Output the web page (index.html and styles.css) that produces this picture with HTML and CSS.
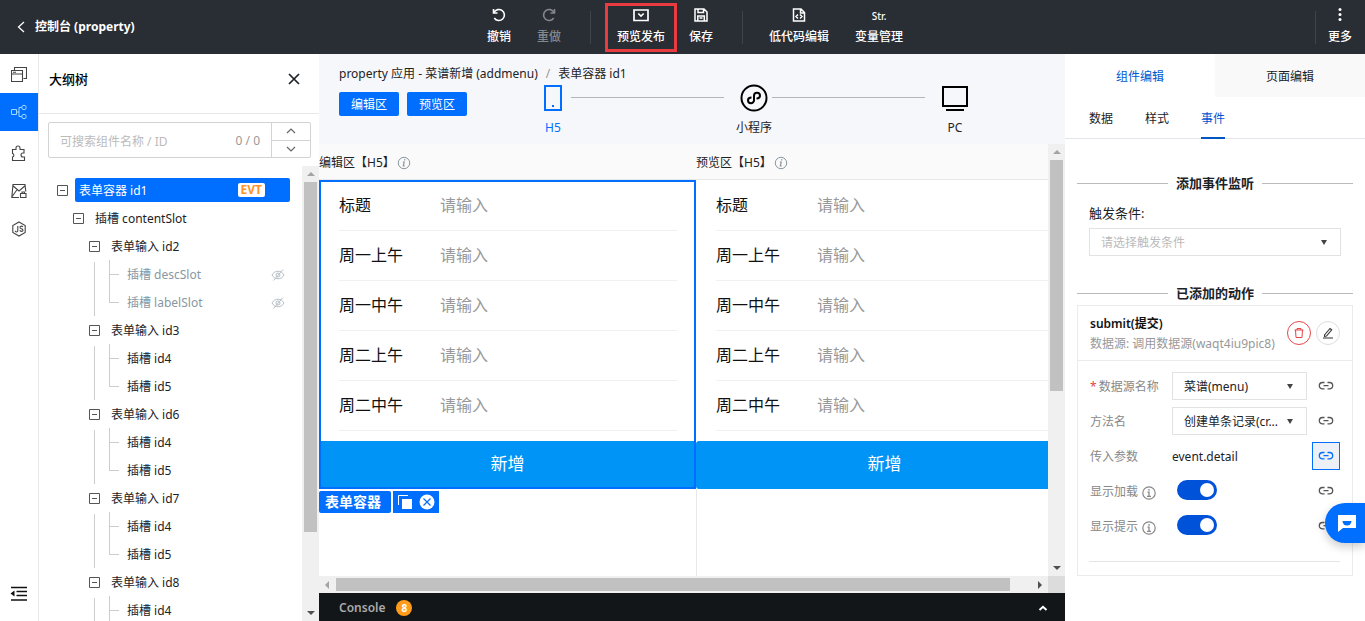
FILE: index.html
```html
<!DOCTYPE html>
<html lang="zh-CN">
<head>
<meta charset="utf-8">
<title>控制台 (property)</title>
<link rel="stylesheet" href="styles.css">
</head>
<body>
<svg class="defs" aria-hidden="true">
  <symbol id="link" viewBox="0 0 16 16"><path d="M6.500 4.500H4.500a3.200 3.200 0 0 0 0 6.400h2M9.500 4.500h2a3.200 3.200 0 0 1 0 6.400h-2M5.500 7.700h5" fill="none" stroke="currentColor" stroke-width="1.300"/></symbol>
  <symbol id="info" viewBox="0 0 14 14"><circle cx="7" cy="7" r="6.200" fill="none" stroke="currentColor" stroke-width="1.200"/><path d="M7 3v1.700M5.500 6.200H7v4M5 10.300h4" fill="none" stroke="currentColor" stroke-width="1.300"/></symbol>
  <symbol id="info-i" viewBox="0 0 14 14"><circle cx="7" cy="7" r="5.700" fill="none" stroke="currentColor"/><path d="M7.900 3.200l-.3 1.300M5.800 6h1.400l-.9 4h1.500" fill="none" stroke="currentColor" stroke-width="1.200"/></symbol>
  <symbol id="hidden-eye" viewBox="0 0 14 12"><path d="M1 6c2.500-5 9.500-5 12 0-2.500 5-9.500 5-12 0zM12 .5L2.500 11.500" fill="none" stroke="currentColor"/><circle cx="7" cy="6" r="2" fill="none" stroke="currentColor"/></symbol>
  <symbol id="minus-box" viewBox="0 0 11 11"><path d="M.5.5h10v10H.5zM3 5.500h5" fill="none" stroke="currentColor"/></symbol>
  <symbol id="up" viewBox="0 0 10 6"><path d="M1 5l4-4 4 4" fill="none" stroke="currentColor" stroke-width="1.200"/></symbol>
  <symbol id="down" viewBox="0 0 10 6"><path d="M1 1l4 4 4-4" fill="none" stroke="currentColor" stroke-width="1.200"/></symbol>
</svg>

<header class="topbar">
  <a class="back" href="#"><svg width="8" height="12" viewBox="0 0 8 12"><path d="M7 1L1.500 6 7 11" fill="none" stroke="currentColor" stroke-width="1.300"/></svg>控制台 (property)</a>
  <nav class="tools">
    <button class="tool"><svg width="16" height="16" viewBox="0 0 16 16"><path d="M2.500 2v4h4M3 5.500a5.500 5.500 0 1 1 .3 5.500" fill="none" stroke="currentColor" stroke-width="1.600"/></svg>撤销</button>
    <button class="tool redo" disabled><svg width="16" height="16" viewBox="0 0 16 16"><path d="M13.500 2v4h-4M13 5.500a5.500 5.500 0 1 0-.3 5.500" fill="none" stroke="currentColor" stroke-width="1.600"/></svg>重做</button>
    <span class="sep"></span>
    <button class="tool marked"><svg width="16" height="16" viewBox="0 0 16 16"><path d="M1 3h14v10.500H1zM5.300 6.500L8 9l2.700-2.500" fill="none" stroke="currentColor" stroke-width="1.700"/></svg>预览发布</button>
    <button class="tool"><svg width="16" height="16" viewBox="0 0 16 16"><path d="M2 2h9l3 3v9H2zM5 2v3.500h5.500V2M4.800 14V9h6.500v5M6.500 11h3" fill="none" stroke="currentColor" stroke-width="1.500"/></svg>保存</button>
    <span class="sep"></span>
    <button class="tool"><svg width="16" height="16" viewBox="0 0 16 16"><path d="M2.500 2H10l3.500 3.500V14h-11zM9.500 2v4h4M7 7.500L5 9.500l2 2M9 7.500l2 2-2 2" fill="none" stroke="currentColor" stroke-width="1.500"/></svg>低代码编辑</button>
    <button class="tool vars"><span class="str">Str.</span>变量管理</button>
  </nav>
  <div class="more"><span class="sep"></span><button class="tool"><svg width="16" height="16" viewBox="0 0 16 16" fill="currentColor"><circle cx="8" cy="2.500" r="1.500"/><circle cx="8" cy="7.500" r="1.500"/><circle cx="8" cy="12.500" r="1.500"/></svg>更多</button></div>
</header>

<div class="app">
  <nav class="rail">
    <button class="rail-item" aria-label="页面"><svg width="16" height="16" viewBox="0 0 16 16"><path d="M.5 4.500h11v11H.5zM.5 8h11M2 6.200h3M3.500 4V1.500h12v11h-3" fill="none" stroke="currentColor" stroke-width="1.100"/></svg></button>
    <button class="rail-item current" aria-label="大纲树"><svg width="16" height="16" viewBox="0 0 16 16"><path d="M.5 5.500h5v5h-5zM5.500 8H8M11 3.500H8v9h3" fill="none" stroke="currentColor"/><circle cx="13" cy="3.500" r="2.200" fill="none" stroke="currentColor"/><circle cx="13" cy="12.500" r="2.200" fill="none" stroke="currentColor"/></svg></button>
    <button class="rail-item" aria-label="组件"><svg width="16" height="16" viewBox="0 0 16 16"><path d="M1.500 4.500H5V3a2 2 0 1 1 4 0v1.500h4V8h-1a2 2 0 1 0 0 4h1.500v3.500h-12V12a1.800 1.800 0 0 0 0-3.500z" fill="none" stroke="currentColor" stroke-width="1.100"/></svg></button>
    <button class="rail-item" aria-label="素材"><svg width="16" height="16" viewBox="0 0 16 16"><path d="M8 14.500H.8L2 1.500h12l.8 7M2.200 3l5.800 5 5.800-5M.8 14l5-7M9.500 10.500h5.500v4H9.500zM11 10.500V9h2.500v1.500" fill="none" stroke="currentColor" stroke-width="1.100"/></svg></button>
    <button class="rail-item" aria-label="脚本"><svg width="16" height="16" viewBox="0 0 16 16"><path d="M8 1l6.200 3.500v7L8 15l-6.200-3.500v-7zM6.800 5v4.500c0 2-2.500 1.800-2.500.3M11.800 6c-.8-1.300-3-1-2.800.5.200 1.500 3 1 3 2.700 0 1.600-2.700 1.600-3.300.1" fill="none" stroke="currentColor" stroke-width="1.100"/></svg></button>
    <button class="rail-item fold" aria-label="收起"><svg width="18" height="16" viewBox="0 0 18 16"><path d="M1 1.500h16M6.500 5.500H17M6.500 9.500H17M1 14h16" fill="none" stroke="currentColor" stroke-width="1.700"/><path d="M4.500 4.500v6L.5 7.500z" fill="currentColor"/></svg></button>
  </nav>

  <section class="outline">
    <div class="outline-head"><h2>大纲树</h2><button aria-label="关闭"><svg width="12" height="12" viewBox="0 0 12 12"><path d="M1 1l10 10M11 1L1 11" stroke="currentColor" stroke-width="1.700"/></svg></button></div>
    <div class="search">
      <input type="text" aria-label="搜索组件" placeholder="可搜索组件名称 / ID"><span class="count">0 / 0</span>
      <div class="stepper"><button aria-label="上一个"><svg width="10" height="6"><use href="#up"/></svg></button><button aria-label="下一个"><svg width="10" height="6"><use href="#down"/></svg></button></div>
    </div>
    <div class="tree-wrap">
      <ul class="tree">
        <li><div class="row"><svg class="box"><use href="#minus-box"/></svg><span class="picked">表单容器 id1<b class="evt">EVT</b></span></div>
          <ul class="level"><li><div class="row"><svg class="box"><use href="#minus-box"/></svg><span class="name">插槽 contentSlot</span></div>
            <ul class="level">
              <li><div class="row"><svg class="box"><use href="#minus-box"/></svg><span class="name">表单输入 id2</span></div>
                <div class="guide"><ul class="leaves muted"><li>插槽 descSlot<svg class="eye"><use href="#hidden-eye"/></svg></li><li>插槽 labelSlot<svg class="eye"><use href="#hidden-eye"/></svg></li></ul></div></li>
              <li><div class="row"><svg class="box"><use href="#minus-box"/></svg><span class="name">表单输入 id3</span></div>
                <div class="guide"><ul class="leaves"><li>插槽 id4</li><li>插槽 id5</li></ul></div></li>
              <li><div class="row"><svg class="box"><use href="#minus-box"/></svg><span class="name">表单输入 id6</span></div>
                <div class="guide"><ul class="leaves"><li>插槽 id4</li><li>插槽 id5</li></ul></div></li>
              <li><div class="row"><svg class="box"><use href="#minus-box"/></svg><span class="name">表单输入 id7</span></div>
                <div class="guide"><ul class="leaves"><li>插槽 id4</li><li>插槽 id5</li></ul></div></li>
              <li><div class="row"><svg class="box"><use href="#minus-box"/></svg><span class="name">表单输入 id8</span></div>
                <div class="guide"><ul class="leaves"><li>插槽 id4</li><li>插槽 id5</li></ul></div></li>
            </ul></li></ul></li>
      </ul>
      <div class="vbar"><i class="arrow-up"></i><i class="thumb tree-thumb"></i><i class="arrow-down"></i></div>
    </div>
  </section>

  <main class="canvas">
    <div class="canvas-head">
      <div class="crumbs"><span>property 应用 - 菜谱新增 (addmenu)</span><span class="slash">/</span><span>表单容器 id1</span></div>
      <div class="modes">
        <button class="mode">编辑区</button><button class="mode">预览区</button>
        <div class="devices">
          <button class="device on"><svg width="28" height="28" viewBox="0 0 28 28"><path d="M6 2h16v24H6z" fill="none" stroke="currentColor" stroke-width="2"/><path d="M13 21h2v2h-2z" fill="currentColor"/></svg>H5</button>
          <span class="wire"></span>
          <button class="device"><svg width="28" height="28" viewBox="0 0 28 28" fill="none" stroke="currentColor" stroke-width="2"><circle cx="14" cy="14" r="12.500"/><path d="M11.500 13.500c-2.500 0-3.500 1.300-3.500 2.700a3 3 0 0 0 6 0v-4.400a3 3 0 0 1 6 0c0 1.400-1 2.700-3.500 2.700"/></svg>小程序</button>
          <span class="wire"></span>
          <button class="device"><svg width="28" height="28" viewBox="0 0 28 28"><path d="M2 3h24v19H2zM5 26h18" fill="none" stroke="currentColor" stroke-width="2"/></svg>PC</button>
        </div>
      </div>
    </div>
    <div class="stage">
      <div class="panes">
        <section class="pane">
          <h3>编辑区【H5】<svg width="14" height="14"><use href="#info-i"/></svg></h3>
          <form class="phone selected">
            <label>标题<input placeholder="请输入"></label><label>周一上午<input placeholder="请输入"></label><label>周一中午<input placeholder="请输入"></label><label>周二上午<input placeholder="请输入"></label><label>周二中午<input placeholder="请输入"></label>
            <button type="button">新增</button>
          </form>
          <div class="selection"><b>表单容器</b><span class="acts"><button aria-label="复制"><svg width="16" height="16" viewBox="0 0 16 16"><path d="M1.500 11V1.500H11" fill="none" stroke="#fff"/><path d="M5 5h10v10H5z" fill="#fff"/></svg></button><button aria-label="删除"><svg width="16" height="16" viewBox="0 0 16 16"><circle cx="8" cy="8" r="7.500" fill="#fff"/><path d="M4.500 4.500l7 7M11.500 4.500l-7 7" stroke="#006eff" stroke-width="1.200"/></svg></button></span></div>
        </section>
        <section class="pane">
          <h3>预览区【H5】<svg width="14" height="14"><use href="#info-i"/></svg></h3>
          <form class="phone">
            <label>标题<input placeholder="请输入"></label><label>周一上午<input placeholder="请输入"></label><label>周一中午<input placeholder="请输入"></label><label>周二上午<input placeholder="请输入"></label><label>周二中午<input placeholder="请输入"></label>
            <button type="button">新增</button>
          </form>
        </section>
      </div>
      <div class="vbar"><i class="arrow-up"></i><i class="thumb stage-thumb"></i><i class="arrow-down"></i></div>
    </div>
    <div class="hbar"><i class="arrow-left"></i><span class="track"><i class="hthumb"></i></span><i class="arrow-right"></i><i class="corner"></i></div>
    <footer class="console">Console<span class="badge">8</span><button aria-label="展开"><svg width="10" height="6" viewBox="0 0 10 6"><path d="M1.500 5L5 1.800 8.500 5" fill="none" stroke="currentColor" stroke-width="2"/></svg></button></footer>
  </main>

  <aside class="props">
    <div class="tabs"><button class="tab on">组件编辑</button><button class="tab">页面编辑</button></div>
    <div class="subtabs"><button>数据</button><button>样式</button><button class="on">事件</button></div>
    <div class="props-body">
      <h4 class="rule">添加事件监听</h4>
      <div class="trigger"><label for="trigger">触发条件:</label>
        <div class="pick wide empty"><select id="trigger"><option>请选择触发条件</option></select></div></div>
      <h4 class="rule">已添加的动作</h4>
      <div class="card">
        <div class="card-head"><div class="card-title"><b>submit(提交)</b><span>数据源: 调用数据源(waqt4iu9pic8)</span></div>
          <button class="round danger" aria-label="删除"><svg width="12" height="12" viewBox="0 0 12 12"><path d="M1.500 3h9M2.500 3l.5 7.500h6l.5-7.500M4 3V1.500h4V3" fill="none" stroke="currentColor"/></svg></button>
          <button class="round" aria-label="编辑"><svg width="12" height="12" viewBox="0 0 12 12"><path d="M2.500 8L8 1.500l1.700 1.400L4.500 9l-2 .3zM1 11h10" fill="none" stroke="currentColor" stroke-width="1.100"/></svg></button></div>
        <div class="fields">
          <div class="field"><label for="source"><em>*</em> 数据源名称</label><div class="pick"><select id="source"><option>菜谱(menu)</option></select></div><button class="bind" aria-label="绑定"><svg><use href="#link"/></svg></button></div>
          <div class="field"><label for="method">方法名</label><div class="pick"><select id="method"><option>创建单条记录(cr...</option></select></div><button class="bind" aria-label="绑定"><svg><use href="#link"/></svg></button></div>
          <div class="field"><span class="label">传入参数</span><span class="value">event.detail</span><button class="bind bound" aria-label="绑定"><svg><use href="#link"/></svg></button></div>
          <div class="field"><label for="loading">显示加载<svg class="hint"><use href="#info"/></svg></label><input class="switch" id="loading" type="checkbox" checked><button class="bind" aria-label="绑定"><svg><use href="#link"/></svg></button></div>
          <div class="field"><label for="tips">显示提示<svg class="hint"><use href="#info"/></svg></label><input class="switch" id="tips" type="checkbox" checked><button class="bind" aria-label="绑定"><svg><use href="#link"/></svg></button></div>
        </div>
      </div>
    </div>
  </aside>
</div>
<button class="chat" aria-label="客服"><svg width="18" height="18" viewBox="0 0 18 18"><path d="M0 1h18v13H5l-5 4z" fill="#fff"/><path d="M4.500 7h9a4.500 4.500 0 0 1-9 0z" fill="#006eff"/></svg></button>
</body>
</html>
```
FILE: styles.css
```css
* { box-sizing: border-box; }
body {
  margin: 0;
  height: 100vh;
  display: flex;
  flex-direction: column;
  overflow: hidden;
  background: #fff;
  color: #1c2226;
  font: 12px/20px "Noto Sans", "Noto Sans CJK SC", sans-serif;
}
button, input, select { font: inherit; color: inherit; border: 0; padding: 0; margin: 0; background: none; border-radius: 0; }
h2, h3, h4, ul { margin: 0; padding: 0; list-style: none; }
svg { display: block; flex: none; }
.defs { position: absolute; width: 0; height: 0; }

.topbar { flex: none; display: flex; height: 54px; background: #292d34; color: #fff; font-weight: 500; }
.back { flex: 0 0 475px; display: flex; align-items: center; gap: 10px; padding-left: 17px; color: #fff; font-weight: 700; text-decoration: none; }
.tools { display: flex; align-items: center; }
.tool { display: flex; flex-direction: column; align-items: center; gap: 4px; height: 49px; padding: 4px 12px 0; white-space: nowrap; }
.tool.redo { margin-left: 2px; color: #85888c; }
.tool.vars { margin-left: 2px; }
.tool.marked { padding: 1px 9px 0; border: 3px solid #e93b40; }
.str { height: 16px; font-size: 10px; line-height: 18px; }
.sep { width: 1px; height: 33px; margin: 0 14px 0 17px; background: #3f444b; }
.more { display: flex; align-items: center; margin-left: auto; padding-right: 1px; }
.more .sep { margin: 0; }

.app { flex: 1; min-height: 0; display: flex; }
.rail { flex: none; width: 39px; display: flex; flex-direction: column; border-right: 1px solid #e8e8e8; padding-top: 1px; padding-bottom: 8px; }
.rail-item { height: 38px; display: grid; place-items: center; color: #444; }
.rail-item.current { background: #006eff; color: #9fd8ff; margin-bottom: 3px; }
.rail-item.fold { margin-top: auto; color: #111; }

.outline { flex: 0 0 280px; min-height: 0; display: flex; flex-direction: column; }
.outline-head { flex: none; height: 60px; display: flex; align-items: center; justify-content: space-between; padding: 0 19px 9px 10px; border-bottom: 1px solid #e8e8e8; }
.outline-head h2 { font-size: 13px; font-weight: 500; color: #000; }
.search { flex: none; display: flex; align-items: center; height: 36px; margin: 8px 8px 8px 9px; border: 1px solid #d3d3d3; border-radius: 2px; color: #999; }
.search input { flex: 1; min-width: 0; height: 34px; padding: 2px 0 0 11px; outline: 0; }
.search input::placeholder { color: #bbb; }
.count { padding: 2px 11px 0; }
.stepper { display: flex; flex-direction: column; width: 39px; height: 34px; border-left: 1px solid #d3d3d3; color: #666; }
.stepper button { flex: 1; display: grid; place-items: center; }
.stepper button + button { border-top: 1px solid #d3d3d3; }
.tree-wrap { flex: 1; min-height: 0; display: flex; }
.tree { flex: 1; overflow: hidden; padding: 10px 0 0 18px; }
.row { display: flex; align-items: center; height: 28px; gap: 7px; }
.box { width: 11px; height: 11px; color: #555; }
.level { padding-left: 16px; }
.name { padding: 2px 0 0 4px; }
.picked { flex: 1; display: flex; justify-content: space-between; align-items: center; height: 24px; margin-right: 12px; padding: 2px 25px 0 4px; border-radius: 2px; background: #006eff; color: #fff; }
.picked .evt { padding: 0 3px; margin-bottom: 2px; border-radius: 2px; background: #fff; color: #ff9423; font-size: 12px; line-height: 14px; }
.guide { margin-left: 5px; padding-left: 15px; background: linear-gradient(#ccc, #ccc) 0 2px / 1px 100% no-repeat; }
.leaves li { display: flex; align-items: center; justify-content: space-between; height: 28px; padding: 2px 17px 0 18px; background: linear-gradient(#ccc, #ccc) 0 0 / 1px 28px no-repeat, linear-gradient(#ccc, #ccc) 0 14px / 10px 1px no-repeat; }
.leaves li:last-child { background-size: 1px 14px, 10px 1px; }
.muted { color: #8797a3; }
.eye { width: 14px; height: 12px; color: #b5bec5; }

i { display: block; flex: none; }
.vbar { flex: none; width: 17px; display: flex; flex-direction: column; align-items: center; padding: 6px 0; background: #f0f0f0; }
.thumb { width: 13px; background: #c1c1c1; }
.tree-thumb { height: 79%; margin-top: 6px; }
.stage-thumb { height: 55%; margin-top: 6px; }
.arrow-up { border: 4px solid transparent; border-top: 0; border-bottom-color: #a3a3a3; }
.arrow-down { margin-top: auto; border: 4px solid transparent; border-bottom: 0; border-top-color: #505050; }
.arrow-left { border: 4px solid transparent; border-left: 0; border-right-color: #a3a3a3; }
.arrow-right { border: 4px solid transparent; border-right: 0; border-left-color: #505050; }

.canvas { flex: 1; min-width: 0; display: flex; flex-direction: column; }
.canvas-head { flex: none; height: 90px; padding: 10px 92px 0 20px; background: #f6f7fa; }
.crumbs { display: flex; white-space: nowrap; }
.slash { padding: 0 8px 0 8px; color: #999; }
.modes { display: flex; align-items: flex-start; gap: 8px; }
.mode { height: 24px; width: 60px; margin-top: 8px; border-radius: 2px; background: #006eff; color: #fff; line-height: 26px; }
.devices { flex: 1; display: flex; align-items: flex-start; margin-left: 60px; }
.device { display: flex; flex-direction: column; align-items: center; gap: 6px; width: 36px; white-space: nowrap; }
.device svg { color: #000; }
.device.on, .device.on svg { color: #006eff; }
.wire { flex: 1; height: 1px; margin-top: 13px; margin-right: 12px; background: #b2b8b9; }
.stage { flex: 1; min-height: 0; display: flex; }
.panes { flex: 1; min-width: 0; display: flex; overflow: hidden; }
.pane { flex: 0 0 377px; }
.pane + .pane { border-left: 1px solid #e8e8e8; }
.pane + .pane h3, .pane + .pane .phone { margin-left: -1px; }
.pane h3 { display: flex; align-items: center; gap: 2px; height: 36px; padding-top: 2px; border-bottom: 1px solid #e8e8e8; background: #fafafa; font-size: 12px; font-weight: 400; }
.pane h3 svg { color: #8b98a0; }
.phone { padding-top: 1px; font-size: 16px; color: #111; background: #fff; }
.phone.selected { outline: 2px solid #006eff; outline-offset: -2px; }
.phone label { display: grid; grid-template-columns: 101px 1fr; align-items: center; height: 50px; margin: 0 19px 0 20px; padding-bottom: 2px; border-bottom: 1px solid #f0f0f0; }
.phone input { min-width: 0; outline: 0; }
.phone input::placeholder { color: #999; }
.phone button { display: block; width: 100%; height: 48px; margin-top: 10px; padding-bottom: 2px; border-radius: 3px; background: #0094f7; color: #fff; font-size: 17px; }
.phone.selected button { padding-bottom: 0; border: 2px solid #006eff; border-top: 0; }
.selection { display: flex; gap: 2px; height: 22px; margin-top: 2px; color: #fff; }
.selection b { width: 72px; padding-left: 6px; border-radius: 2px; background: #006eff; font-size: 14px; line-height: 22px; }
.acts { display: flex; align-items: center; gap: 6px; padding: 0 4px; background: #006eff; }
.hbar { flex: none; height: 17px; display: flex; align-items: center; background: #f0f0f0; }
.hbar .arrow-left { margin: 0 7px 0 6px; }
.track { flex: 1; }
.hthumb { width: 96%; height: 13px; background: #c1c1c1; }
.hbar .arrow-right { margin-right: 6px; }
.corner { width: 17px; height: 17px; background: #dcdcdc; }
.console { flex: none; display: flex; align-items: center; gap: 11px; height: 28px; padding: 2px 17px 0 20px; background: #121619; color: #aaa; font-weight: 600; }
.console button { margin-left: auto; color: #fff; }
.badge { width: 16px; height: 16px; border-radius: 8px; background: #ff9d1a; color: #fff; font-size: 10px; font-weight: 700; line-height: 16px; text-align: center; }

.props { flex: 0 0 300px; min-height: 0; background: #fff; }
.tabs { display: grid; grid-template-columns: 1fr 1fr; height: 43px; }
.tab { padding-top: 2px; background: #f9f9f9; }
.tab.on { background: #fff; color: #0057d0; }
.subtabs { display: flex; gap: 32px; height: 42px; padding-left: 24px; border-bottom: 1px solid #e2e5ea; }
.subtabs button { height: 42px; padding-top: 4px; border-bottom: 2px solid transparent; }
.subtabs .on { color: #0057d0; border-color: #0057c0; }
.props-body { padding: 33px 12px 0; }
.rule { display: flex; align-items: center; gap: 8px; font-size: 13px; font-weight: 600; line-height: 22px; }
.rule::before, .rule::after { content: ""; flex: 1; height: 1px; background: #bbb; }
.trigger { padding: 9px 12px 26px; font-size: 13px; }
.trigger label { display: block; line-height: 20px; margin-bottom: 5px; }
.pick { display: grid; align-items: center; width: 135px; height: 28px; border: 1px solid #e2e2e2; font-size: 12px; }
.pick.wide { width: auto; }
.pick.empty select { color: #bbb; }
.pick select { grid-area: 1 / 1; width: 100%; height: 26px; padding: 2px 0 0 11px; appearance: none; outline: 0; }
.pick::after { content: ""; grid-area: 1 / 1; justify-self: end; margin-right: 13px; border: 3px solid transparent; border-top: 5px solid #444; border-bottom: 0; pointer-events: none; }
.card { margin-top: 1px; border: 1px solid #ebebeb; }
.card-head { display: flex; align-items: center; gap: 5px; height: 55px; padding: 0 12px; border-bottom: 1px solid #ebebeb; }
.card-title { flex: 1; display: flex; flex-direction: column; min-width: 0; padding-top: 2px; white-space: nowrap; }
.card-title b { color: #111; font-weight: 600; }
.card-title span { color: #999; }
.round { flex: none; width: 24px; height: 24px; display: grid; place-items: center; border: 1px solid #ddd; border-radius: 12px; color: #333; }
.round.danger { border-color: #e54545; color: #e54545; }
.fields { display: grid; gap: 7px; margin: 11px 12px 13px 11px; padding-bottom: 21px; border-bottom: 1px solid #e5e5e5; }
.field { display: flex; align-items: center; height: 28px; }
.field label, .label { flex: 0 0 83px; display: flex; align-items: center; gap: 4px; padding: 2px 0 0 1px; color: #888; white-space: nowrap; }
.field label:has(em) { gap: 2px; }
.value { padding-top: 2px; }
.field em { color: #e54545; font-style: normal; }
.hint { width: 14px; height: 14px; margin-top: 2px; }
.bind { width: 28px; height: 28px; margin-left: auto; display: grid; place-items: center; color: #555; }
.bind svg { width: 16px; height: 16px; }
.bind.bound { border: 1px solid #006eff; background: #edf1f7; color: #006eff; }
.switch { appearance: none; width: 40px; height: 20px; margin-left: 5px; margin-bottom: 2px; padding: 3px; border-radius: 10px; background: #0052d9; display: flex; justify-content: flex-end; }
.switch::after { content: ""; width: 14px; height: 14px; border-radius: 7px; background: #fff; }
.chat { position: fixed; right: 0; bottom: 78px; width: 40px; height: 40px; display: grid; place-items: center; padding-left: 4px; border-radius: 20px 0 0 20px; background: #006eff; box-shadow: 0 4px 10px #0003; }
```
